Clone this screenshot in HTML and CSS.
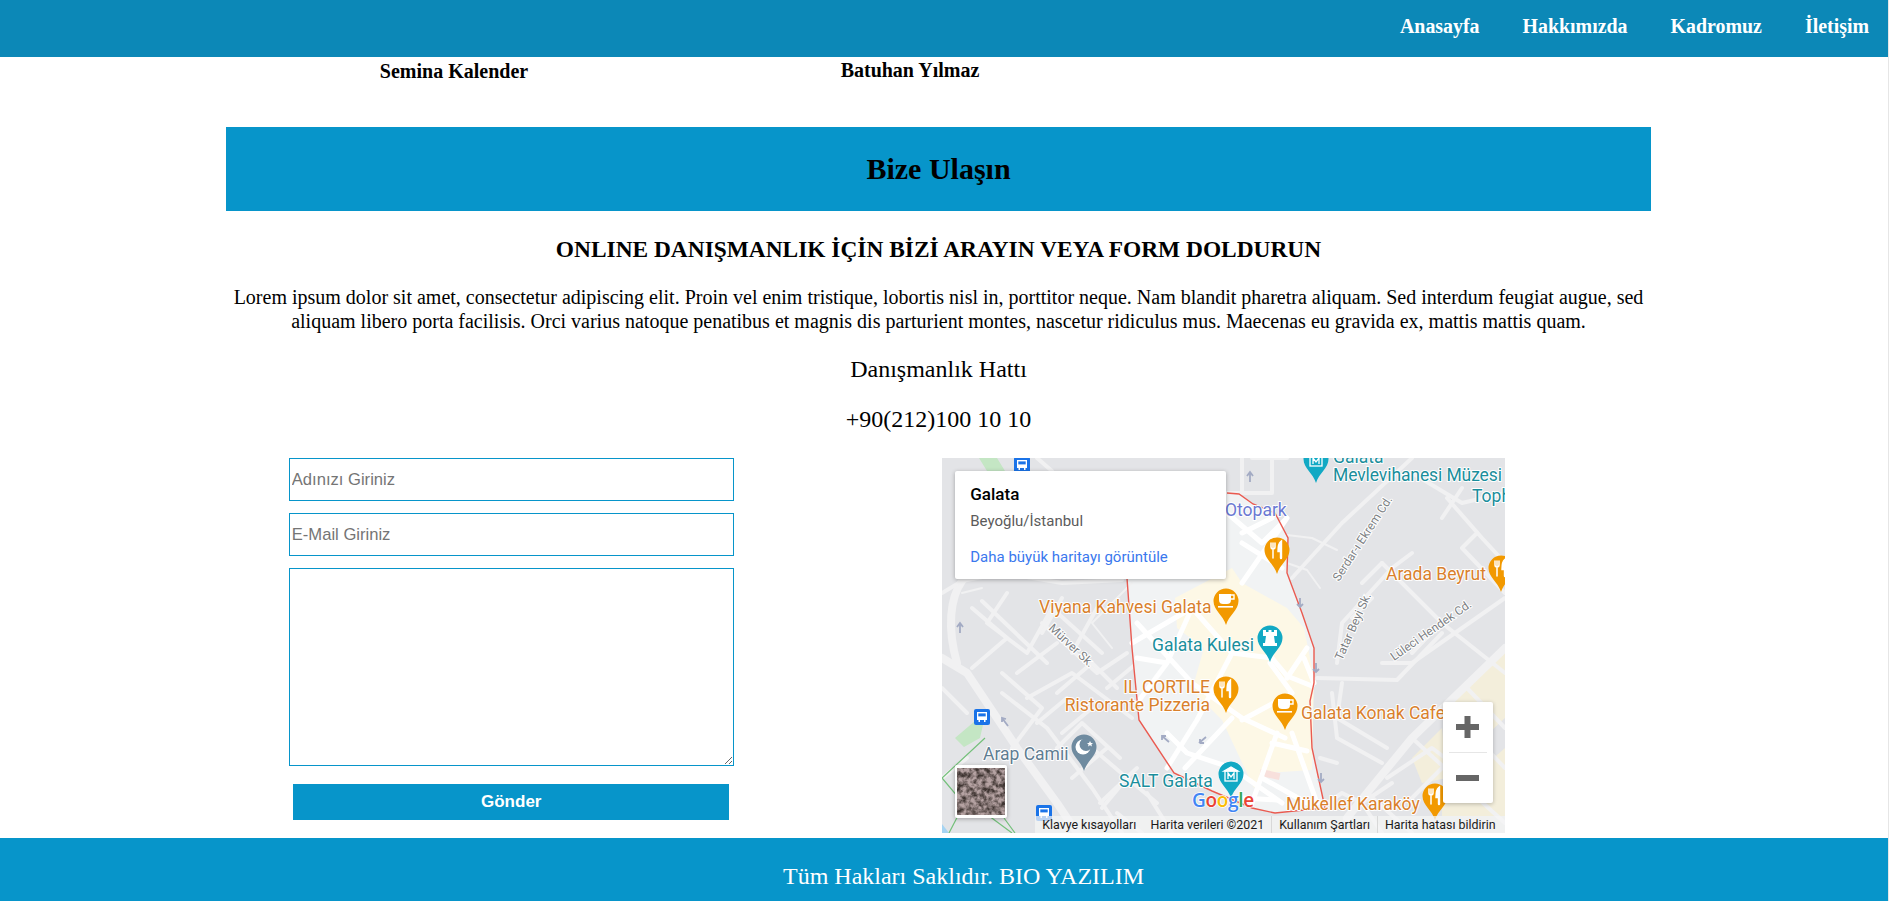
FILE: index.html
```html
<!DOCTYPE html>
<html lang="tr">
<head>
<meta charset="UTF-8">
<meta name="viewport" content="width=device-width, initial-scale=1.0">
<title>Bize Ulaşın</title>
<link rel="stylesheet" href="styles.css">
</head>
<body>

<header class="topbar">
    <nav class="topnav">
        <a href="#">Anasayfa</a>
        <a href="#">Hakkımızda</a>
        <a href="#">Kadromuz</a>
        <a href="#">İletişim</a>
    </nav>
</header>

<section class="team">
    <h3 class="team-name team-name-low">Semina Kalender</h3>
    <h3 class="team-name">Batuhan Yılmaz</h3>
</section>

<main class="contact">
    <h2 class="banner">Bize Ulaşın</h2>
    <h3 class="lead">ONLINE DANIŞMANLIK İÇİN BİZİ ARAYIN VEYA FORM DOLDURUN</h3>
    <p class="intro">Lorem ipsum dolor sit amet, consectetur adipiscing elit. Proin vel enim tristique, lobortis nisl in, porttitor neque. Nam blandit pharetra aliquam. Sed interdum feugiat augue, sed aliquam libero porta facilisis. Orci varius natoque penatibus et magnis dis parturient montes, nascetur ridiculus mus. Maecenas eu gravida ex, mattis mattis quam.</p>
    <p class="hotline">Danışmanlık Hattı</p>
    <p class="hotline">+90(212)100 10 10</p>

    <div class="contact-row">
        <form class="contact-form">
            <input type="text" placeholder="Adınızı Giriniz">
            <input type="text" placeholder="E-Mail Giriniz">
            <textarea></textarea>
            <button type="button">Gönder</button>
        </form>

        <div class="map">
            <svg class="map-base" viewBox="0 0 563 375" width="563" height="375" xmlns="http://www.w3.org/2000/svg">
                <defs>
                    <filter id="sat" x="0" y="0" width="100%" height="100%">
                        <feTurbulence type="fractalNoise" baseFrequency="0.2" numOctaves="3" seed="7"/>
                        <feColorMatrix values="0 0 0 0 0.46  0 0 0 0 0.36  0 0 0 0 0.36  2.4 0 0 0 -0.6"/>
                    </filter>
                    <path id="pin" d="M0,24 C-3,14 -12.5,9 -12.5,0 A12.5,12.5 0 1 1 12.5,0 C12.5,9 3,14 0,24Z"/>
                    <g id="i-food" fill="none" stroke="#fff" stroke-linecap="round">
                        <path d="M-6,-7 V-3 C-6,-1 -4,-1 -4,-1 V8 M-4,-7 V-2 M-2,-7 V-3 C-2,-1 -4,-1 -4,-1" stroke-width="1.5"/>
                        <path d="M4,8 V-8 C1.5,-6 1.5,-2 1.5,1 H4" stroke-width="2.4"/>
                    </g>
                    <g id="i-cup">
                        <path d="M-7,-7 H5 V-1 C5,2 3,3 1,3 H-3 C-5,3 -7,2 -7,-1Z" fill="#fff"/>
                        <path d="M5,-6 H8 V-2 H5" fill="none" stroke="#fff" stroke-width="1.4"/>
                        <rect x="-8" y="5" width="15" height="1.6" fill="#fff"/>
                    </g>
                    <path id="i-tower" d="M-7,-8 H-4 V-6 H-1.5 V-8 H1.5 V-6 H4 V-8 H7 V-2 H4 L5,5 H7 V8 H-7 V5 H-5 L-4,-2 H-7Z" fill="#fff"/>
                    <g id="i-museum" fill="none" stroke="#fff" stroke-width="1.3">
                        <path d="M-7,-3 L0,-7 L7,-3Z" fill="#fff"/>
                        <rect x="-6" y="-3" width="12" height="10"/>
                        <path d="M-3,5 V-1 L0,3 L3,-1 V5"/>
                    </g>
                    <g id="i-bus">
                        <rect x="-8" y="-8" width="16" height="16" rx="2" fill="#1a73e8"/>
                        <path d="M-5,-5 H5 V3 H3.5 V5 H2 V3 H-2 V5 H-3.5 V3 H-5Z" fill="#fff"/>
                        <rect x="-3.7" y="-3.6" width="7.4" height="3" fill="#1a73e8"/>
                    </g>
                </defs>

                <rect width="563" height="375" fill="#e3e4e7"/>
                <path class="park" d="M37,0 L45,13 L63,13 L55,0Z M13,280 L33,263 L43,258 L38,280 L22,289Z"/>
                <path class="beige" d="M505,245 L563,190 L563,260 L520,300Z M470,300 L500,270 L505,320 L480,325Z M500,345 L563,290 L563,358 L500,358Z M534,222 L563,195 L563,240Z"/>
                <path class="water" d="M0,366 L7,375 L0,375Z"/>

                <path class="old-town" d="M285,35 L297,36 L311,46 L333,55 L346,80 L345,115 L360,155 L372,190 L372,225 L368,243 L370,290 L383,350 L333,355 L310,350 L270,333 L232,315 L197,262 L190,190 L185,120Z"/>
                <path class="old-yellow" d="M233,140 L290,110 L300,125 L345,150 L362,170 L372,220 L370,312 L322,315 L312,330 L280,262 L250,232 L262,190 L235,170Z"/>
                <rect class="pink" x="318" y="313" width="20" height="7" transform="rotate(12 328 316)"/>

                <g class="road road-wide">
                    <path d="M0,200 L25,215 L75,290 L115,345 L135,375"/>
                    <path d="M20,123 C8,140 5,170 15,205"/>
                    <path d="M563,190 L470,280 L425,335 L405,360"/>
                </g>
                <g class="road">
                    <path d="M0,135 L20,123 L60,115 L120,125 L180,122"/>
                    <path d="M65,135 L45,165 L85,195 L110,150 M40,143 L105,205 M110,150 L160,195"/>
                    <path d="M60,215 L100,250 L70,290 M60,235 L105,270 L150,330 L180,375"/>
                    <path d="M85,240 L130,215 L190,260 M115,290 L140,265 L178,300 M130,320 L165,290 M158,345 L195,310"/>
                    <path d="M100,165 L155,215 L185,195 M120,140 L100,175 M155,150 L130,195 M165,230 L195,205"/>
                    <path d="M30,150 L65,180 L30,210 M75,215 L115,185 M115,235 L150,205 L175,230 M95,265 L125,240 M120,275 L150,250"/>
                    <path d="M150,290 L185,320 L160,350 M185,320 L215,345 M175,355 L200,375 M205,335 L230,375"/>
                    <path d="M300,0 L300,35 M330,0 L330,35 L285,35 M95,0 L110,13 M310,0 L345,0"/>
                    <path d="M350,120 L400,65 L470,0"/>
                    <path d="M395,205 L400,165 L450,110 L470,95 M440,105 L500,165 L563,215"/>
                    <path d="M440,205 L470,205 L563,140 M470,15 L520,45 L563,35 M520,30 L500,60 M505,40 L540,80 L563,105"/>
                    <path d="M535,75 L520,90 L563,135 M410,160 L430,140 M420,125 L440,105"/>
                    <path d="M375,220 L455,222 L500,175 M492,172 L470,195 M400,225 L395,260 L445,290 M390,235 L395,280 L440,305"/>
                    <path d="M425,335 L470,375 M470,280 L530,335 L563,365 M525,230 L563,270 M505,250 L563,310 M445,320 L490,290 L510,305 M470,340 L500,310 M420,345 L450,325"/>
                    <path d="M385,345 L400,335 L420,345 L440,375 M378,300 L395,305 M0,230 L25,255 M0,320 L25,300"/>
                </g>
                <g class="road road-thin">
                    <path d="M345,77 L370,80 L395,92 M345,105 L365,112 L378,130"/>
                    <path d="M20,135 L40,130 M190,125 L150,165 L170,190"/>
                </g>
                <g class="road road-white">
                    <path d="M285,55 L320,85 L345,60 M300,75 L330,60 M345,60 L300,125 M300,85 L340,110"/>
                    <path d="M190,185 L250,150 L290,195 L330,200 M195,165 L250,225 L300,260 L343,280"/>
                    <path d="M250,150 L225,205 L195,245 M195,200 L225,205 M290,195 L255,262 L225,310"/>
                    <path d="M225,275 L245,295 L290,310 L340,345 M290,260 L243,310 M330,200 L345,218 L370,228"/>
                    <path d="M328,205 L350,235 L300,262 M335,275 L310,345 M350,275 L375,345 M330,285 L365,293"/>
                    <path d="M320,320 L365,345 M300,340 L335,342 M345,220 L365,190 M362,200 L372,225"/>
                </g>
                <path class="trail" d="M0,320 L43,280 M0,320 L22,346 L7,375 M22,346 L45,335 M43,355 L70,375 M62,360 L73,375"/>

                <path class="boundary" d="M285,35 L297,36 L311,46 L333,55 L346,80 L345,115 L360,155 L372,190 L372,225 L368,243 L370,290 L383,350 L333,355 L310,350 L270,333 L232,315 L197,262 L190,190 L185,120"/>

                <g class="arrows">
                    <path d="M18,175 L18,165 M15,169 L18,165 L21,169"/>
                    <path d="M308,24 L308,14 M305,18 L308,14 L311,18"/>
                    <path d="M358,140 L358,149 M355,146 L358,149 L361,146"/>
                    <path d="M374,205 L374,214 M371,211 L374,214 L377,211"/>
                    <path d="M66,268 L60,260 M60,264 L60,260 L64,261"/>
                    <path d="M227,284 L220,278 M220,282 L220,278 L224,278"/>
                    <path d="M257,285 L264,279 M258,285 L258,281 M258,285 L262,285"/>
                    <path d="M379,315 L379,324 M376,321 L379,324 L382,321"/>
                </g>

                <g class="pin-orange">
                    <use href="#pin" x="335" y="92"/>
                    <use href="#pin" x="284" y="143"/>
                    <use href="#pin" x="284" y="231"/>
                    <use href="#pin" x="343" y="248"/>
                    <use href="#pin" x="493" y="338"/>
                    <use href="#pin" x="559" y="110"/>
                </g>
                <g class="pin-teal">
                    <use href="#pin" x="328" y="180"/>
                    <use href="#pin" x="289" y="316"/>
                    <use href="#pin" x="374" y="1"/>
                </g>
                <use class="pin-slate" href="#pin" x="142" y="289"/>
                <use href="#i-food" x="335" y="92"/>
                <use href="#i-food" x="284" y="231"/>
                <use href="#i-food" x="493" y="338"/>
                <use href="#i-food" x="559" y="110"/>
                <use href="#i-cup" x="284" y="143"/>
                <use href="#i-cup" x="343" y="248"/>
                <use href="#i-tower" x="328" y="180"/>
                <use href="#i-museum" x="289" y="316"/>
                <use href="#i-museum" x="374" y="1"/>
                <circle cx="141" cy="289" r="7.5" fill="#fff"/>
                <circle cx="144" cy="286.5" r="6.5" fill="#6f8ba0"/>
                <path d="M148,283 l1,2 2,0 -1.6,1.4 .6,2 -2,-1.1 -2,1.1 .6,-2 -1.6,-1.4 2,0Z" fill="#fff"/>
                <use href="#i-bus" x="80" y="7"/>
                <use href="#i-bus" x="40" y="259"/>
                <use href="#i-bus" x="102" y="355"/>

                <g class="street">
                    <text transform="translate(397,124) rotate(-57)">Serdar-ı Ekrem Cd.</text>
                    <text transform="translate(400,203) rotate(-66)">Tatar Beyi Sk.</text>
                    <text transform="translate(452,203) rotate(-35)">Lüleci Hendek Cd.</text>
                    <text transform="translate(106,171) rotate(43)">Mürver Sk.</text>
                </g>
                <g class="label label-orange">
                    <text x="444" y="122">Arada Beyrut</text>
                    <text x="97" y="155">Viyana Kahvesi Galata</text>
                    <text x="268" y="235" text-anchor="end">IL CORTILE</text>
                    <text x="268" y="253" text-anchor="end">Ristorante Pizzeria</text>
                    <text x="359" y="261">Galata Konak Cafe</text>
                    <text x="344" y="352">Mükellef Karaköy</text>
                </g>
                <g class="label label-teal">
                    <text x="391" y="5">Galata</text>
                    <text x="391" y="23" textLength="169">Mevlevihanesi Müzesi</text>
                    <text x="530" y="44">Tophane</text>
                    <text x="210" y="193">Galata Kulesi</text>
                    <text x="177" y="329">SALT Galata</text>
                </g>
                <text class="label label-blue" x="283" y="58">Otopark</text>
                <text class="label label-slate" x="41" y="302">Arap Camii</text>
                <text class="google" x="250" y="349"><tspan fill="#4285f4">G</tspan><tspan fill="#ea4335">o</tspan><tspan fill="#fbbc05">o</tspan><tspan fill="#4285f4">g</tspan><tspan fill="#34a853">l</tspan><tspan fill="#ea4335">e</tspan></text>

                <rect class="sat-frame" x="13" y="307" width="52" height="53" rx="2"/>
                <rect x="15" y="310" width="48" height="47" fill="#3f3532"/>
                <rect x="15" y="310" width="48" height="47" filter="url(#sat)"/>
            </svg>

            <div class="map-card">
                <div class="map-card-title">Galata</div>
                <div class="map-card-addr">Beyoğlu/İstanbul</div>
                <a class="map-card-link" href="#">Daha büyük haritayı görüntüle</a>
            </div>

            <div class="zoom-box">
                <svg width="50" height="101" viewBox="0 0 50 101" xmlns="http://www.w3.org/2000/svg">
                    <path d="M13,25 H36 M24.5,14 V36 M13,76 H36" stroke="#666" stroke-width="6" fill="none"/>
                    <path d="M6,50.5 H44" stroke="#e6e6e6" stroke-width="1"/>
                </svg>
            </div>

            <div class="map-legal">
                <span>Klavye kısayolları</span>
                <span>Harita verileri ©2021</span>
                <span class="legal-sep">Kullanım Şartları</span>
                <span class="legal-sep">Harita hatası bildirin</span>
            </div>
        </div>
    </div>
</main>

<footer class="site-footer">Tüm Hakları Saklıdır. BIO YAZILIM</footer>

</body>
</html>
```

FILE: styles.css
```css
html,
body {
    margin: 0;
    padding: 0;
    height: 901px;
    overflow: hidden;
}

body {
    font-family: "Liberation Serif", "Times New Roman", serif;
    background-color: #fff;
    color: #000;
    border-right: 1px solid #e6e6e6;
    display: flex;
    flex-direction: column;
}

/* header */
.topbar {
    height: 57px;
    background-color: #0c88b7;
    display: flex;
    justify-content: flex-end;
    align-items: center;
    padding-right: 19px;
    padding-bottom: 4px;
    box-sizing: border-box;
    flex-shrink: 0;
}

.topnav {
    display: flex;
    gap: 43px;
}

.topnav a {
    color: #fff;
    font-size: 19.9px;
    font-weight: bold;
    text-decoration: none;
}

/* names left over from the team section */
.team {
    height: 70px;
    width: 1368px;
    margin-left: 226px;
    display: grid;
    grid-template-columns: repeat(3, 456px);
    text-align: center;
    flex-shrink: 0;
}

.team-name {
    margin: 2px 0 0;
    font-size: 20px;
    line-height: 22px;
}

.team-name-low {
    margin-top: 3px;
}

/* contact */
.contact {
    width: 1425px;
    margin-left: 226px;
    flex: 1;
    text-align: center;
}

.banner {
    margin: 0;
    height: 84px;
    line-height: 84px;
    background-color: #0795ca;
    font-size: 30px;
}

.lead {
    margin: 25px 0 0;
    font-size: 23.4px;
    line-height: 26px;
}

.intro {
    margin: 23px 0 0;
    font-size: 20px;
    line-height: 24px;
}

.hotline {
    margin: 22px 0 0;
    font-size: 24px;
    line-height: 28px;
}

.contact-row {
    display: grid;
    grid-template-columns: 1fr 1fr;
    margin: 25px 71px 0 -71px;
}

.contact-form {
    width: 445px;
    margin: 0 auto;
    display: flex;
    flex-direction: column;
    align-items: center;
}

.contact-form input,
.contact-form textarea {
    width: 100%;
    box-sizing: border-box;
    border: 1px solid #0795ca;
    border-radius: 0;
    padding: 1px 2px;
    margin-bottom: 12px;
    font-family: "Liberation Sans", Arial, sans-serif;
    font-size: 16.6px;
    outline: none;
}

.contact-form input {
    height: 43px;
}

.contact-form textarea {
    height: 198px;
    margin-bottom: 18px;
}

.contact-form button {
    width: 436px;
    height: 36px;
    border: none;
    background-color: #0795ca;
    color: #fff;
    font-family: "Liberation Sans", Arial, sans-serif;
    font-size: 17px;
    font-weight: bold;
    padding: 0;
    cursor: pointer;
}

/* map */
.map {
    position: relative;
    width: 563px;
    height: 375px;
    margin: 0 auto;
    overflow: hidden;
    text-align: left;
    font-family: Roboto, "Liberation Sans", Arial, sans-serif;
}

.map-base {
    display: block;
}

.park { fill: #c4e6c4; }
.beige { fill: #f3eedb; }
.water { fill: #a6d4f2; }
.old-town { fill: #f1f3f4; }
.old-yellow { fill: #fdf8e6; }
.pink { fill: #f8e0dc; }

.road {
    fill: none;
    stroke: #f1f1f2;
    stroke-width: 4;
    stroke-linecap: round;
    stroke-linejoin: round;
}

.road-wide { stroke-width: 8; }
.road-thin { stroke-width: 2; }
.road-white { stroke: #fff; stroke-width: 5; }

.trail {
    fill: none;
    stroke: #74c07a;
    stroke-width: 1.2;
}

.boundary {
    fill: none;
    stroke: #ea5a50;
    stroke-width: 1.4;
}

.arrows {
    fill: none;
    stroke: #a3abc4;
    stroke-width: 1.8;
}

.pin-orange { fill: #f29900; }
.pin-teal { fill: #12a9c4; }
.pin-slate { fill: #6f8ba0; }

.label {
    font-family: Roboto, "Liberation Sans", Arial, sans-serif;
    font-size: 17.5px;
    paint-order: stroke;
    stroke: #fff;
    stroke-width: 2px;
    stroke-linejoin: round;
}

.label-orange { fill: #d9802c; }
.label-teal { fill: #1a8e9c; }
.label-blue { fill: #6a78d2; }
.label-slate { fill: #5f7d92; }

.street {
    font-family: Roboto, "Liberation Sans", Arial, sans-serif;
    font-size: 12px;
    fill: #7d7f84;
    paint-order: stroke;
    stroke: #fff;
    stroke-width: 2px;
}

.google {
    font-family: "Open Sans", "Noto Sans", sans-serif;
    font-size: 19px;
    font-weight: 600;
    letter-spacing: -0.3px;
    paint-order: stroke;
    stroke: #fff;
    stroke-width: 1.5px;
}

.sat-frame {
    fill: #fff;
    filter: drop-shadow(0 1px 2px rgba(0, 0, 0, 0.3));
}

.map-card {
    position: absolute;
    left: 13px;
    top: 13px;
    width: 271px;
    height: 108px;
    box-sizing: border-box;
    padding: 12px 15px;
    background-color: #fff;
    border-radius: 2px;
    box-shadow: 0 1px 4px rgba(0, 0, 0, 0.3);
}

.map-card-title {
    font-size: 17px;
    font-weight: 500;
    line-height: 22px;
    color: #000;
}

.map-card-addr {
    margin-top: 7px;
    font-size: 15px;
    line-height: 18px;
    color: #5b5b5b;
}

.map-card-link {
    display: block;
    margin-top: 18px;
    font-size: 15px;
    line-height: 18px;
    color: #3a78ee;
    text-decoration: none;
}

.zoom-box {
    position: absolute;
    left: 501px;
    top: 244px;
    width: 50px;
    height: 101px;
    background-color: #fff;
    border-radius: 2px;
    box-shadow: 0 1px 4px rgba(0, 0, 0, 0.25);
}

.zoom-box svg {
    display: block;
}

.map-legal {
    position: absolute;
    left: 93px;
    right: 0;
    bottom: 0;
    height: 17px;
    display: flex;
    align-items: center;
    padding-left: 7px;
    gap: 14px;
    background-color: rgba(245, 245, 245, 0.72);
    font-size: 12.4px;
    line-height: 17px;
    color: #1a1a1a;
}

.legal-sep {
    border-left: 1px solid #d8d8d8;
    padding-left: 7px;
    margin-left: -7px;
}

/* footer */
.site-footer {
    height: 63px;
    flex-shrink: 0;
    box-sizing: border-box;
    background-color: #0795ca;
    color: #fff;
    font-size: 24px;
    line-height: 76px;
    text-align: center;
    padding-left: 39px;
}
```
